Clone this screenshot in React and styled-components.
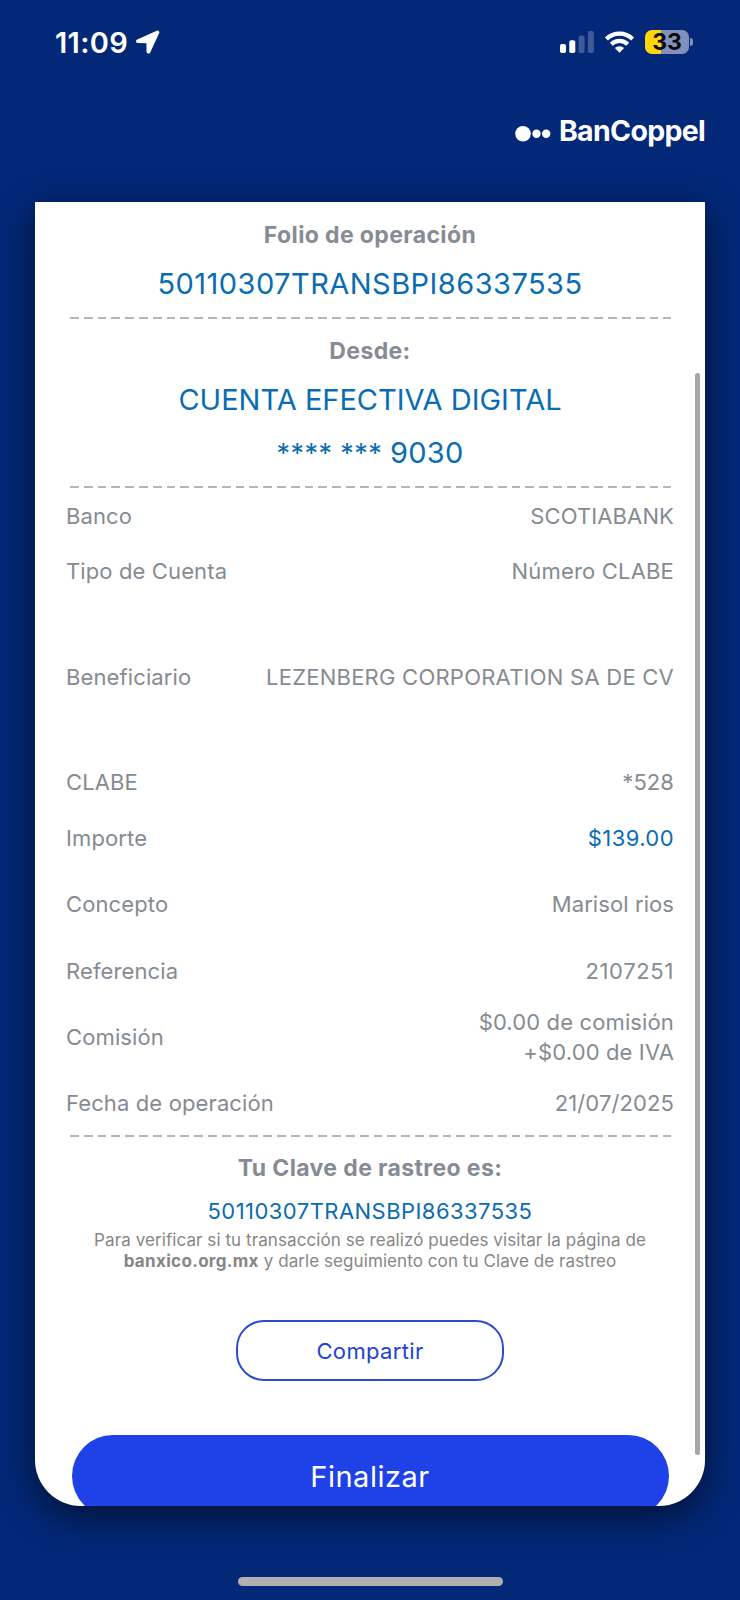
import styled, { createGlobalStyle } from "styled-components";

const GlobalStyle = createGlobalStyle`
  * {
    box-sizing: border-box;
  }

  body {
    margin: 0;
    background-color: #032878;
    font-family: Inter, "Liberation Sans", sans-serif;
  }
`;

const Screen = styled.div`
  display: flex;
  flex-direction: column;
  height: 1600px;
  overflow: hidden;
  background-color: #032878;
`;

const StatusBar = styled.div`
  display: flex;
  justify-content: space-between;
  height: 84px;
  padding: 0 47px 0 55px;
  color: white;
`;

const StatusGroup = styled.div`
  display: flex;
  align-items: center;
`;

const Time = styled.div`
  width: 80px;
  font-size: 29px;
  font-weight: 600;
  letter-spacing: 0.35px;
`;

const SignalIcon = styled.svg`
  margin-right: 10px;
`;

const WifiIcon = styled.svg`
  margin-right: 10px;
`;

const Battery = styled.div`
  display: flex;
  align-items: center;
  justify-content: center;
  width: 44px;
  height: 24px;
  border-radius: 7px;
  background: linear-gradient(to right, #ffd60a 15.5px, #8191bb 15.5px);
  color: #0b0b0b;
  font-size: 23px;
  font-weight: 700;
  letter-spacing: 0;
`;

const BatteryTip = styled.div`
  width: 3px;
  height: 8px;
  margin-left: 1px;
  border-radius: 0 4px 4px 0;
  background-color: #8191bb;
`;

const BrandBar = styled.div`
  display: flex;
  justify-content: flex-end;
  height: 118px;
  padding: 28px 35px 0 0;
`;

const BrandName = styled.div`
  margin-left: 8px;
  color: white;
  font-size: 28.5px;
  font-weight: 700;
  line-height: 37px;
  letter-spacing: -0.7px;
`;

const Receipt = styled.div`
  position: relative;
  width: 670px;
  height: 1304px;
  margin: 0 auto;
  padding: 19px 31px 0;
  overflow: hidden;
  border-radius: 0 0 46px 46px;
  background-color: white;
  box-shadow: 0 10px 36px rgba(0, 0, 0, 0.6);
  text-align: center;
`;

const ScrollThumb = styled.div`
  position: absolute;
  top: 171px;
  right: 5px;
  width: 5px;
  height: 1082px;
  border-radius: 3px;
  background-color: #a6a6a6;
`;

const Title = styled.div`
  margin-top: ${(props) => props.$top || 0}px;
  color: #868b94;
  font-size: 23px;
  font-weight: 700;
  line-height: 28px;
  letter-spacing: 0.38px;
`;

const Amount = styled.div`
  margin-top: ${(props) => props.$top}px;
  color: #0a6cb2;
  font-size: 29px;
  line-height: 36px;
  letter-spacing: ${(props) => props.$spacing || 0}px;
`;

const Mask = styled.span`
  font-size: 27px;
  letter-spacing: 0.4px;
`;

const Dashes = styled.div`
  height: 2px;
  margin: ${(props) => props.$top}px 3px 0 3.5px;
  background: repeating-linear-gradient(
    to right,
    #b5b5b5 0 8.8px,
    transparent 8.8px 13.8px
  );
`;

const Row = styled.div`
  display: flex;
  align-items: center;
  justify-content: space-between;
  height: ${(props) => props.$height}px;
  margin-top: ${(props) => props.$top || 0}px;
  color: #868b92;
  font-size: 22px;
  line-height: 30px;
`;

const Label = styled.div`
  letter-spacing: 0.12px;
`;

const Value = styled.div`
  color: ${(props) => (props.$accent ? "#0a6cb2" : "inherit")};
  letter-spacing: ${(props) => props.$spacing}px;
  text-align: right;
  white-space: pre-line;
`;

const TrackingKey = styled.div`
  margin-top: 15px;
  color: #0a6cb2;
  font-size: 22px;
  line-height: 28px;
  letter-spacing: 0.45px;
`;

const Note = styled.div`
  margin-top: 5px;
  color: #868686;
  font-size: 17px;
  line-height: 20.5px;
  letter-spacing: 0.08px;

  & > b {
    letter-spacing: 0.32px;
  }
`;

const ShareButton = styled.button`
  display: block;
  width: 268px;
  height: 61px;
  margin: 49px auto 0;
  border: 2px solid #2c4bd0;
  border-radius: 28px;
  background-color: white;
  color: #2242d6;
  font-family: inherit;
  font-size: 22px;
  letter-spacing: 0.35px;
`;

const FinishButton = styled.button`
  display: block;
  width: 597px;
  height: 82px;
  margin: 54px auto 0;
  border: none;
  border-radius: 41px;
  background-color: #1f42e8;
  color: white;
  font-family: inherit;
  font-size: 29px;
  letter-spacing: 0.5px;
`;

const HomeIndicator = styled.div`
  width: 265px;
  height: 9px;
  margin: 71px auto 0;
  border-radius: 5px;
  background-color: #b0b0b0;
`;

const rows = [
  { label: "Banco", value: "SCOTIABANK", height: 55, spacing: 0.12 },
  { label: "Tipo de Cuenta", value: "Número CLABE", height: 56, spacing: 0.18 },
  {
    label: "Beneficiario",
    value: "LEZENBERG CORPORATION SA DE CV",
    height: 155,
    spacing: 0.24,
  },
  { label: "CLABE", value: "*528", height: 56, spacing: 0.06 },
  {
    label: "Importe",
    value: "$139.00",
    height: 55,
    spacing: 0.43,
    accent: true,
  },
  {
    label: "Concepto",
    value: "Marisol rios",
    height: 67,
    spacing: 0.08,
    top: 5,
  },
  { label: "Referencia", value: "2107251", height: 67, spacing: 0.65 },
  {
    label: "Comisión",
    value: "$0.00 de comisión\n+$0.00 de IVA",
    height: 66,
    spacing: 0.13,
  },
  { label: "Fecha de operación", value: "21/07/2025", height: 65, spacing: 0.1 },
];

function App() {
  return (
    <Screen>
      <GlobalStyle />
      <StatusBar>
        <StatusGroup>
          <Time>11:09</Time>
          <svg width="25" height="24" viewBox="0 0 25 24">
            <path
              d="M22.2 1.6 2.6 10.3c-.9.4-.7 1.8.3 1.8l9.2.1c.2 0 .3.1.3.3l.1 9.1c0 1.1 1.4 1.3 1.8.4L23.3 2.7c.3-.8-.4-1.4-1.1-1.1Z"
              fill="white"
              stroke="white"
              strokeWidth="2"
              strokeLinejoin="round"
            />
          </svg>
        </StatusGroup>
        <StatusGroup>
          <SignalIcon width="35" height="22" viewBox="0 0 35 22">
            <rect x="1" y="13" width="6" height="9" rx="1.8" fill="white" />
            <rect x="10.3" y="9.3" width="6" height="12.7" rx="1.8" fill="white" />
            <rect x="19.6" y="4.6" width="6" height="17.4" rx="1.8" fill="#3f5a98" />
            <rect x="28.9" y="0" width="6" height="22" rx="1.8" fill="#3f5a98" />
          </SignalIcon>
          <WifiIcon width="31" height="22" viewBox="0 0 31 22">
            <g fill="none" stroke="white" strokeWidth="4.2">
              <path d="M2.4 8A18.8 18.8 0 0 1 28.6 8" />
              <path d="M7.3 13.2A11.8 11.8 0 0 1 23.7 13.2" />
            </g>
            <path
              d="M15.5 21.7 10.9 17.1A6.6 6.6 0 0 1 20.1 17.1Z"
              fill="white"
            />
          </WifiIcon>
          <Battery>33</Battery>
          <BatteryTip />
        </StatusGroup>
      </StatusBar>
      <BrandBar>
        <svg width="36" height="44" viewBox="0 0 36 44">
          <g fill="white">
            <circle cx="8" cy="21.7" r="7.8" />
            <circle cx="21.5" cy="21.7" r="4.2" />
            <circle cx="31.2" cy="21.7" r="4.2" />
          </g>
        </svg>
        <BrandName>BanCoppel</BrandName>
      </BrandBar>
      <Receipt>
        <Title>Folio de operación</Title>
        <Amount $top={17} $spacing={0.46}>
          50110307TRANSBPI86337535
        </Amount>
        <Dashes $top={15} />
        <Title $top={18}>Desde:</Title>
        <Amount $top={17}>CUENTA EFECTIVA DIGITAL</Amount>
        <Amount $top={17} $spacing={0.2}>
          <Mask>**** *** </Mask>9030
        </Amount>
        <Dashes $top={14} />
        <div>
          {rows.map((row) => (
            <Row key={row.label} $height={row.height} $top={row.top}>
              <Label>{row.label}</Label>
              <Value $spacing={row.spacing} $accent={row.accent}>
                {row.value}
              </Value>
            </Row>
          ))}
        </div>
        <Dashes $top={0} />
        <Title $top={17}>Tu Clave de rastreo es:</Title>
        <TrackingKey>50110307TRANSBPI86337535</TrackingKey>
        <Note>
          Para verificar si tu transacción se realizó puedes visitar la página
          de
          <br />
          <b>banxico.org.mx</b> y darle seguimiento con tu Clave de rastreo
        </Note>
        <ShareButton>Compartir</ShareButton>
        <FinishButton>Finalizar</FinishButton>
        <ScrollThumb />
      </Receipt>
      <HomeIndicator />
    </Screen>
  );
}

export default App;
